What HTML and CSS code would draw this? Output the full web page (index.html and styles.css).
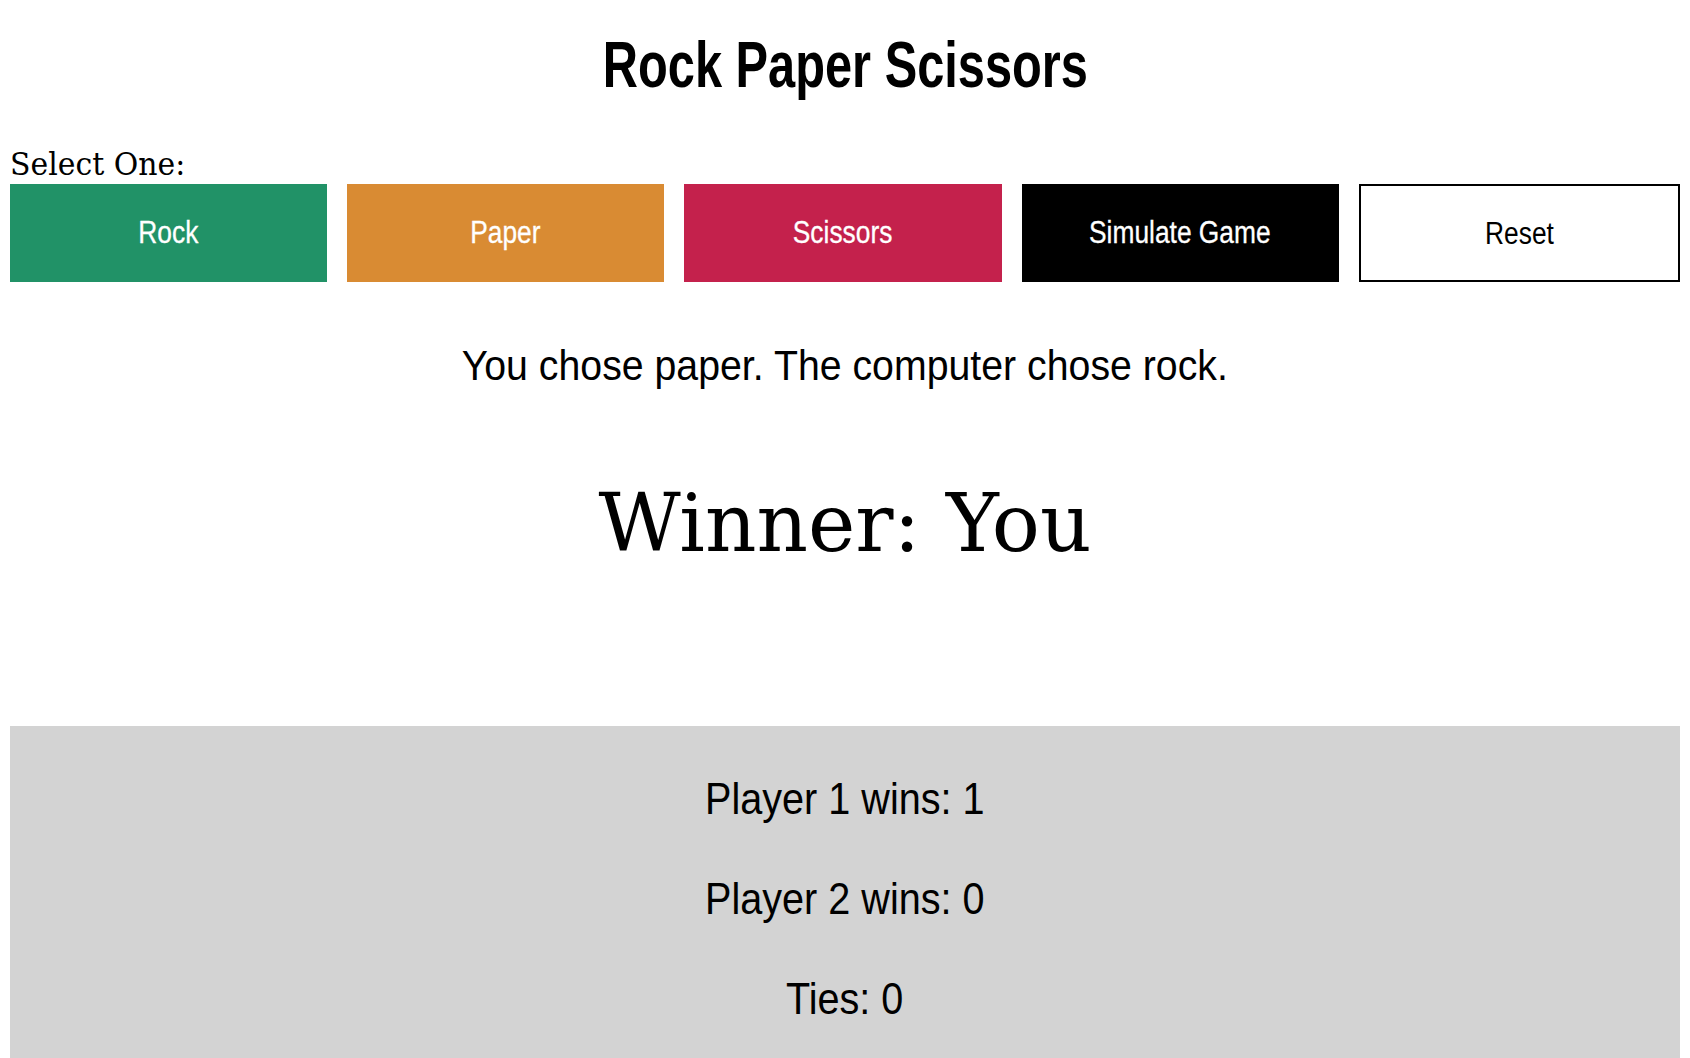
FILE: index.html
```html
<!DOCTYPE html>
<html lang="en">
<head>
<meta charset="utf-8">
<title>Rock Paper Scissors</title>
<link rel="stylesheet" href="styles.css">
</head>
<body>
<div class="page">
  <h1 class="title"><span class="narrow narrow-title">Rock Paper Scissors</span></h1>
  <div class="select-label"><span class="narrow narrow-select">Select One:</span></div>
  <div class="buttons">
    <button class="btn btn-rock"><span class="narrow narrow-btn">Rock</span></button>
    <button class="btn btn-paper"><span class="narrow narrow-btn">Paper</span></button>
    <button class="btn btn-scissors"><span class="narrow narrow-btn">Scissors</span></button>
    <button class="btn btn-sim"><span class="narrow narrow-btn">Simulate Game</span></button>
    <button class="btn btn-reset"><span class="narrow narrow-btn">Reset</span></button>
  </div>
  <p class="result"><span class="narrow narrow-result">You chose paper. The computer chose rock.</span></p>
  <p class="winner">Winner: You</p>
  <div class="scores">
    <p class="score"><span class="narrow narrow-score">Player 1 wins: 1</span></p>
    <p class="score"><span class="narrow narrow-score">Player 2 wins: 0</span></p>
    <p class="score"><span class="narrow narrow-score">Ties: 0</span></p>
  </div>
</div>
</body>
</html>
```

FILE: styles.css
```css
html, body {
  margin: 0;
  padding: 0;
  background: #fff;
}
.page {
  padding: 0 10px;
  color: #000;
}
.narrow {
  display: inline-block;
  white-space: nowrap;
  transform-origin: center;
}
.narrow-title { transform: scaleX(0.75); }
.narrow-btn { transform: scaleX(0.85); }
.narrow-result { transform: scaleX(0.935); }
.narrow-score { transform: scaleX(0.88); }
.narrow-select {
  transform: scaleX(0.935);
  transform-origin: left center;
}
.title {
  margin: 0;
  padding-top: 25px;
  text-align: center;
  font-family: "Liberation Sans", Arial, sans-serif;
  font-weight: bold;
  font-size: 65px;
  line-height: 80px;
}
.select-label {
  margin-top: 39px;
  font-family: "DejaVu Serif", serif;
  font-size: 32px;
  line-height: 40px;
  height: 40px;
}
.buttons {
  display: flex;
  gap: 20px;
}
.btn {
  flex: 1 1 0;
  min-width: 0;
  box-sizing: border-box;
  height: 98px;
  border: none;
  margin: 0;
  padding: 0;
  font-family: "Liberation Sans", Arial, sans-serif;
  font-size: 31px;
  line-height: 34px;
  color: #fff;
  -webkit-text-stroke: 0.3px #fff;
}
.btn-rock { background: #219267; }
.btn-paper { background: #d98b33; }
.btn-scissors { background: #c4214c; }
.btn-sim { background: #000; }
.btn-reset {
  background: #fff;
  color: #000;
  -webkit-text-stroke: 0;
  border: 2px solid #000;
}
.btn-reset .narrow { position: relative; top: 1px; }
.result {
  margin: 54px 0 0;
  text-align: center;
  font-family: "Liberation Sans", Arial, sans-serif;
  font-size: 42px;
  line-height: 60px;
}
.winner {
  margin: 78px 0 0;
  text-align: center;
  font-family: "DejaVu Serif", serif;
  font-size: 80px;
  line-height: 100px;
}
.scores {
  margin-top: 152px;
  background: #d3d3d3;
  padding: 23px 0 40px;
}
.score {
  margin: 0;
  text-align: center;
  font-family: "Liberation Sans", Arial, sans-serif;
  font-size: 45px;
  line-height: 100px;
}
```
